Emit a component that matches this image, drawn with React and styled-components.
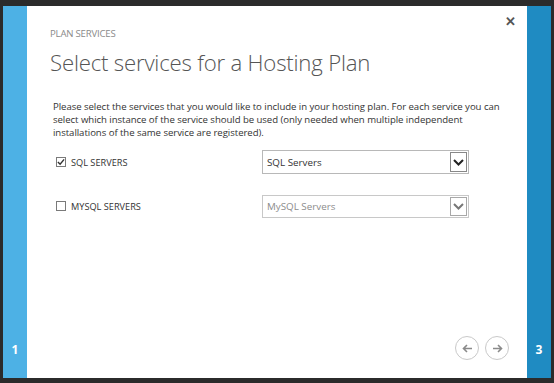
import React from "react";
import styled, { createGlobalStyle } from "styled-components";

const GlobalStyle = createGlobalStyle`
  html, body {
    margin: 0;
    padding: 0;
    background: #2b2b2b;
  }
  * {
    box-sizing: border-box;
  }
`;

const Screen = styled.div`
  display: flex;
  width: 554px;
  height: 383px;
  padding: 6px 3px 5px 3px;
  background: #2b2b2b;
  font-family: "Open Sans", "Noto Sans", sans-serif;
`;

const Strip = styled.div`
  width: ${(p) => p.width}px;
  background: ${(p) => p.color};
  display: flex;
  flex-direction: column;
  justify-content: flex-end;
  align-items: center;
  padding-bottom: 20px;
  color: #fff;
  font-size: 12px;
  font-weight: 700;
`;

const Dialog = styled.div`
  position: relative;
  flex: 1;
  background: #fff;
  display: flex;
  flex-direction: column;
  padding: 22px 18px 18px 23px;
  color: #333;
`;

const Close = styled.button`
  position: absolute;
  top: 9px;
  right: 11px;
  border: 0;
  background: none;
  padding: 0;
  color: #555;
  font-size: 13px;
  font-weight: 700;
  line-height: 1;
  cursor: pointer;
`;

const Eyebrow = styled.div`
  font-size: 9.6px;
  color: #8a8a8a;
  letter-spacing: -0.2px;
  line-height: 12px;
`;

const Title = styled.h1`
  margin: 8px 0 0 0;
  font-size: 22.2px;
  font-weight: 300;
  color: #555;
  letter-spacing: -0.2px;
  line-height: 30px;
`;

const Intro = styled.p`
  margin: 22px 0 0 3px;
  font-size: 9.6px;
  line-height: 13px;
  color: #333;
  letter-spacing: -0.05px;
  white-space: nowrap;
`;

const Services = styled.div`
  margin-top: 11px;
  display: flex;
  flex-direction: column;
  gap: 20px;
`;

const ServiceRow = styled.div`
  display: flex;
  align-items: center;
  height: 24px;
`;

const CheckLabel = styled.label`
  display: flex;
  align-items: center;
  gap: 5px;
  width: 212px;
  flex-shrink: 0;
  padding-left: 6px;
  font-size: 9.2px;
  color: #333;
`;

const Box = styled.span`
  width: 10px;
  height: 10px;
  border: 1px solid #7a7a7a;
  display: flex;
  align-items: center;
  justify-content: center;
  background: #fff;
`;

const Select = styled.div`
  width: 207px;
  flex-shrink: 0;
  height: ${(p) => (p.muted ? 23 : 24)}px;
  border: 1px solid ${(p) => (p.muted ? "#c8c8c8" : "#b8b8b8")};
  display: flex;
  align-items: center;
  justify-content: space-between;
  padding: 0 1px 0 4px;
  font-size: 9.8px;
  color: ${(p) => (p.muted ? "#8c8c8c" : "#333")};
`;

const Arrow = styled.span`
  width: 17px;
  height: ${(p) => (p.muted ? 19 : 20)}px;
  border: 1px solid ${(p) => (p.muted ? "#a8a8a8" : "#888")};
  display: flex;
  align-items: center;
  justify-content: center;
`;

const Footer = styled.div`
  margin-top: auto;
  display: flex;
  justify-content: flex-end;
  gap: 6px;
`;

const NavButton = styled.button`
  width: 24px;
  height: 24px;
  border-radius: 50%;
  border: 1.5px solid #c9c9c9;
  background: #fff;
  padding: 0;
  display: flex;
  align-items: center;
  justify-content: center;
`;

const Check = () => (
  <svg width="9" height="8" viewBox="0 0 9 8">
    <path d="M1 4 L3.5 6.5 L8 1" fill="none" stroke="#333" strokeWidth="1.6" />
  </svg>
);

const Chevron = ({ color }) => (
  <svg width="11" height="7" viewBox="0 0 11 7">
    <path d="M1 1 L5.5 5.5 L10 1" fill="none" stroke={color} strokeWidth="2" />
  </svg>
);

const ArrowIcon = ({ dir }) => (
  <svg width="11" height="9" viewBox="0 0 11 9">
    {dir === "left" ? (
      <path d="M10 4.5 H1.5 M5 1 L1.5 4.5 L5 8" fill="none" stroke="#8a8a8a" strokeWidth="1.6" />
    ) : (
      <path d="M1 4.5 H9.5 M6 1 L9.5 4.5 L6 8" fill="none" stroke="#8a8a8a" strokeWidth="1.6" />
    )}
  </svg>
);

const services = [
  { label: "SQL SERVERS", value: "SQL Servers", checked: true },
  { label: "MYSQL SERVERS", value: "MySQL Servers", checked: false },
];

const App = () => (
  <>
    <GlobalStyle />
    <Screen>
      <Strip width={24} color="#4db1e5">1</Strip>
      <Dialog>
        <Close aria-label="close">✕</Close>
        <Eyebrow>PLAN SERVICES</Eyebrow>
        <Title>Select services for a Hosting Plan</Title>
        <Intro>
          Please select the services that you would like to include in your hosting plan. For each service you can
          <br />
          select which instance of the service should be used (only needed when multiple independent
          <br />
          installations of the same service are registered).
        </Intro>
        <Services>
          {services.map((s) => (
            <ServiceRow key={s.label}>
              <CheckLabel>
                <Box>{s.checked && <Check />}</Box>
                {s.label}
              </CheckLabel>
              <Select muted={!s.checked}>
                {s.value}
                <Arrow muted={!s.checked}>
                  <Chevron color={s.checked ? "#222" : "#777"} />
                </Arrow>
              </Select>
            </ServiceRow>
          ))}
        </Services>
        <Footer>
          <NavButton aria-label="back">
            <ArrowIcon dir="left" />
          </NavButton>
          <NavButton aria-label="next">
            <ArrowIcon dir="right" />
          </NavButton>
        </Footer>
      </Dialog>
      <Strip width={24} color="#1f8bc2">3</Strip>
    </Screen>
  </>
);

export default App;
